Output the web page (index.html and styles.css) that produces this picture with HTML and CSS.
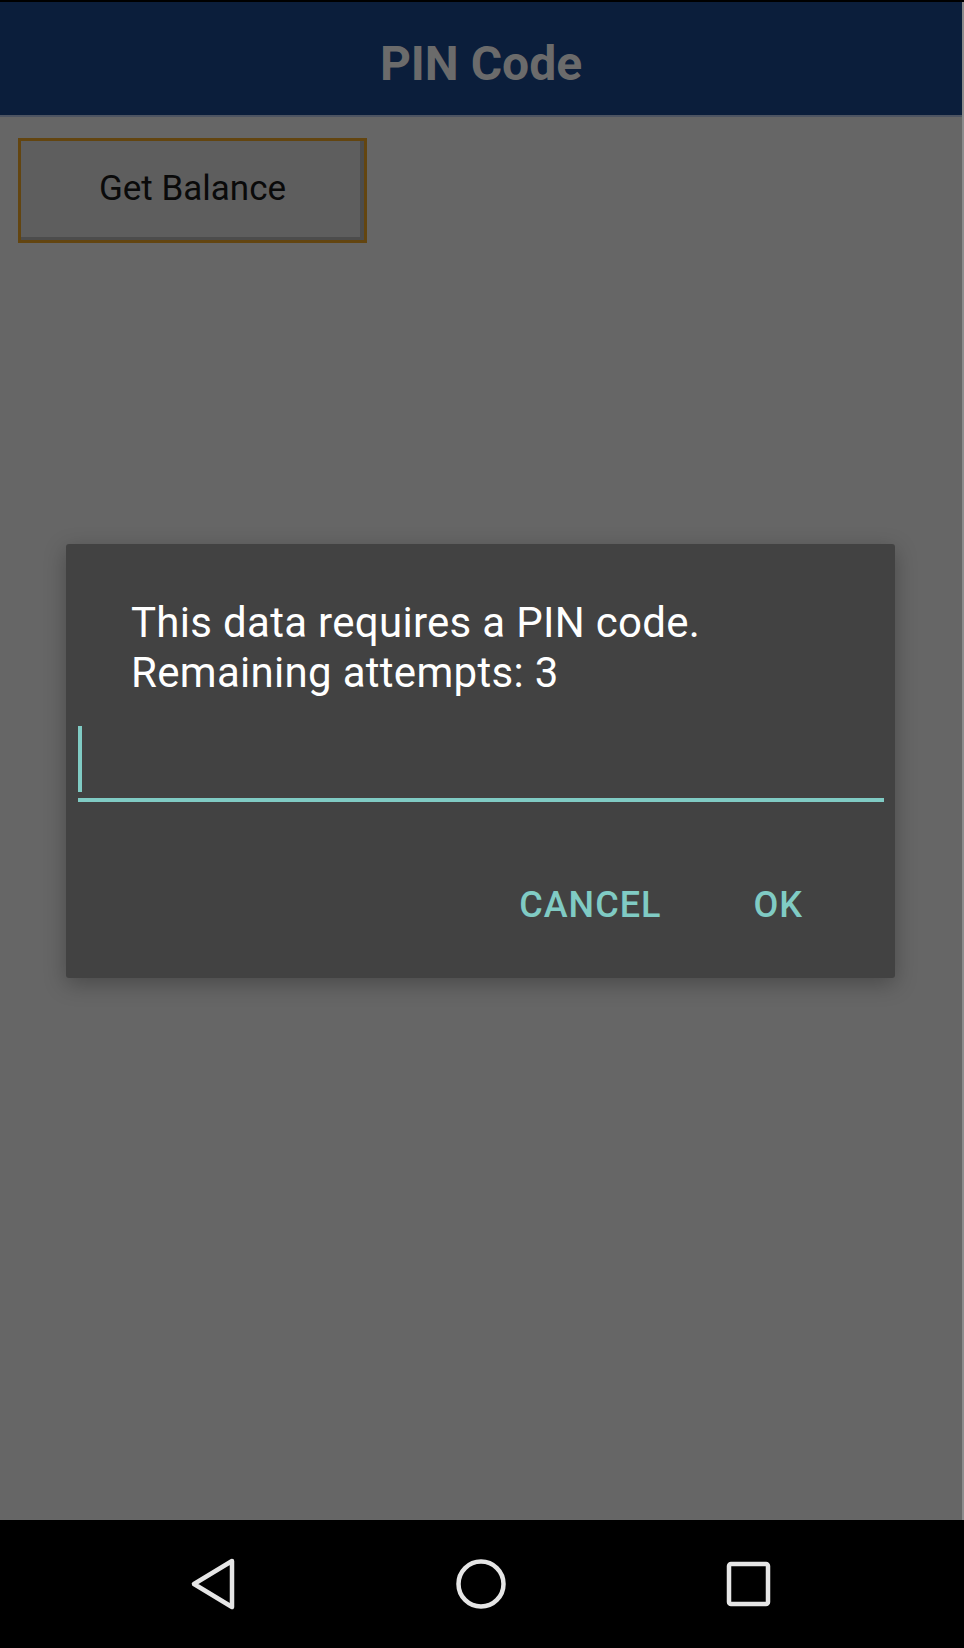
FILE: index.html
```html
<!DOCTYPE html>
<html>
<head>
<meta charset="utf-8">
<link rel="stylesheet" href="styles.css">
</head>
<body>
<div class="screen">
  <div class="statusline"></div>
  <header class="appbar"><h1 class="title">PIN Code</h1></header>
  <main class="content">
    <button class="btn-balance">Get Balance</button>
  </main>
  <nav class="navbar">
    <svg class="navicons" width="964" height="128" viewBox="0 0 964 128">
      <path d="M232 41 L194 64 L232 87 Z" fill="none" stroke="#e6e6e6" stroke-width="4.5" stroke-linejoin="round"/>
      <circle cx="481" cy="64" r="22.5" fill="none" stroke="#e6e6e6" stroke-width="4.5"/>
      <rect x="729" y="44" width="39" height="40" rx="2" fill="none" stroke="#e6e6e6" stroke-width="4.5"/>
    </svg>
  </nav>
  <div class="dialog">
    <p class="message">This data requires a PIN code.<br>Remaining attempts: 3</p>
    <div class="field">
      <span class="cursor"></span>
      <div class="underline"></div>
    </div>
    <div class="actions">
      <span class="action">CANCEL</span>
      <span class="action">OK</span>
    </div>
  </div>
</div>
</body>
</html>
```

FILE: styles.css
```css
html, body {
  margin: 0;
  padding: 0;
}
body {
  width: 964px;
  height: 1648px;
  background: #000;
  font-family: Roboto, "Liberation Sans", sans-serif;
  overflow: hidden;
}
.screen {
  position: relative;
  width: 964px;
  height: 1648px;
  display: flex;
  flex-direction: column;
  box-shadow: inset -2px 0 0 #8c8c8c;
}
.statusline {
  height: 2px;
  background: #000;
  flex: none;
}
.appbar {
  flex: none;
  height: 115px;
  box-sizing: border-box;
  padding-top: 34px;
  background: #0b1e3b;
  border-bottom: 2px solid #4d5462;
  margin-right: 2px;
}
.title {
  margin: 0;
  text-align: center;
  font-size: 48px;
  line-height: 56px;
  font-weight: 700;
  color: #6b6b6b;
}
.content {
  flex: 1;
  background: #666666;
  padding: 21px 0 0 18px;
  margin-right: 2px;
}
.btn-balance {
  display: flex;
  align-items: center;
  justify-content: center;
  width: 349px;
  height: 105px;
  box-sizing: border-box;
  padding: 0 0 5px 0;
  background: #5e5e5e;
  border: 3px solid #634510;
  box-shadow: inset -4px -3px 0 #4c4c4c;
  font-family: Roboto, "Liberation Sans", sans-serif;
  font-size: 35px;
  color: #0a0a0a;
}
.navbar {
  flex: none;
  height: 128px;
  background: #000;
}
.navicons {
  display: block;
}
.dialog {
  position: absolute;
  left: 66px;
  top: 544px;
  width: 829px;
  height: 434px;
  box-sizing: border-box;
  background: #424242;
  border-radius: 3px;
  box-shadow: 0 6px 22px rgba(0, 0, 0, 0.28);
  padding-top: 54px;
}
.message {
  margin: 0 0 0 65px;
  font-size: 42px;
  line-height: 50px;
  letter-spacing: 0.3px;
  color: #ffffff;
}
.field {
  margin: 28px 11px 0 12px;
}
.cursor {
  display: block;
  width: 4px;
  height: 66px;
  background: #80cbc4;
}
.underline {
  margin-top: 6px;
  height: 4px;
  background: #80cbc4;
}
.actions {
  display: flex;
  justify-content: flex-end;
  gap: 92px;
  margin-top: 82px;
  padding-right: 92px;
}
.action {
  font-size: 36px;
  line-height: 42px;
  font-weight: 500;
  letter-spacing: 1px;
  color: #80cbc4;
}
```
